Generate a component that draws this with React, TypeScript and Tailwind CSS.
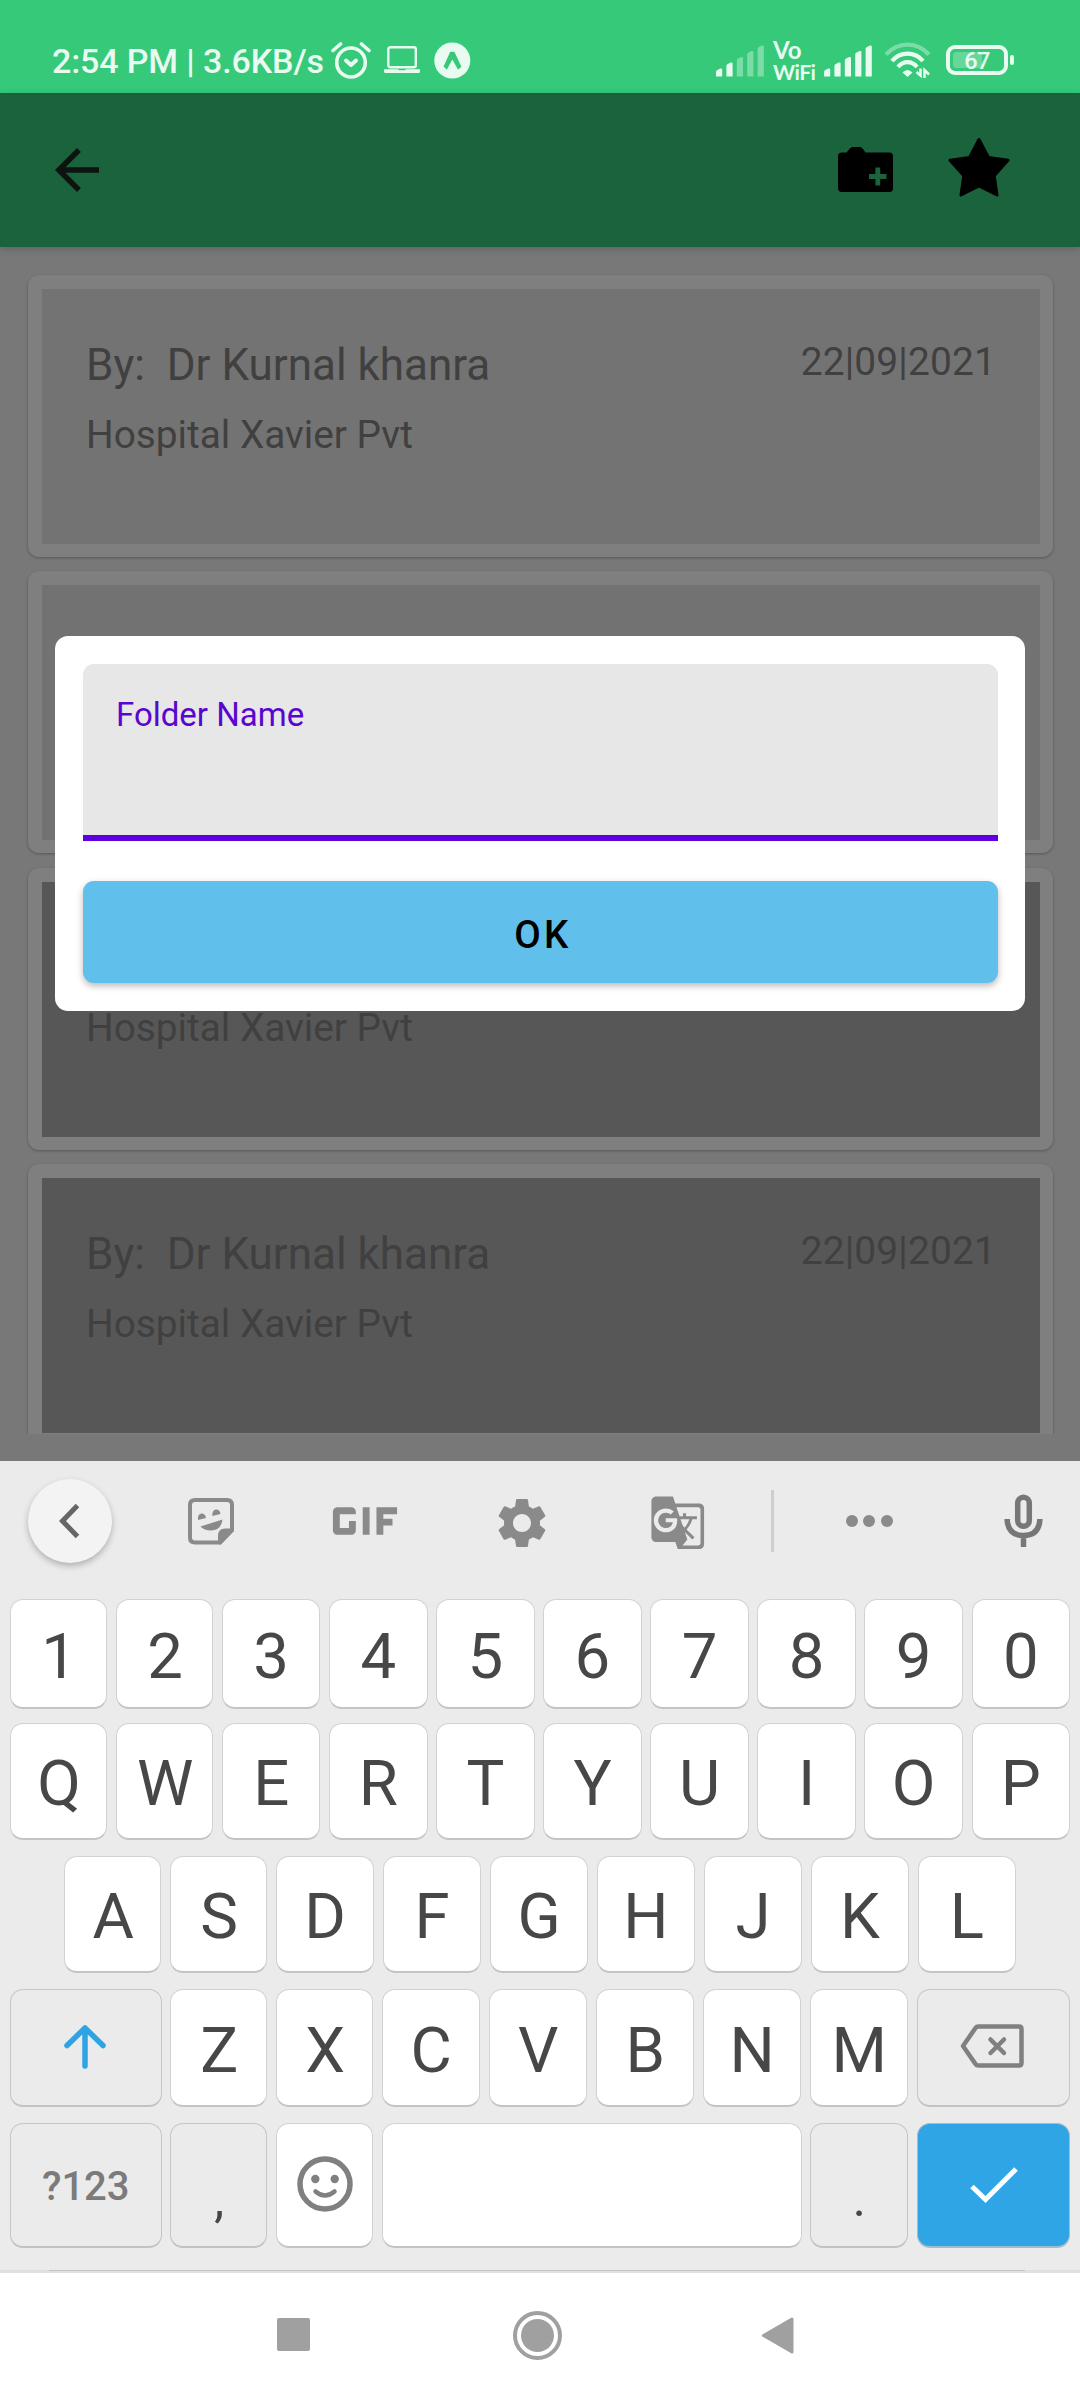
import React from "react";
import { MdArrowBack, MdGif, MdGTranslate, MdSettings } from "react-icons/md";

const LIGHT = "#e9fbf1";

function AlarmIcon() {
  return (
    <svg width="40" height="38" viewBox="0 0 40 38" fill="none" stroke={LIGHT} strokeLinecap="round" strokeLinejoin="round">
      <ellipse cx="20" cy="21.5" rx="14.3" ry="14.5" strokeWidth="3.6" />
      <path d="M2 9.5 9.5 3M38 9.5 30.500 3" strokeWidth="3.6" />
      <path d="M15 19.500l5 4.500 5-4.500" strokeWidth="4" />
    </svg>
  );
}

function LaptopIcon() {
  return (
    <svg width="36" height="28" viewBox="0 0 36 28" fill="none" stroke={LIGHT}>
      <rect x="4.300" y="1.300" width="27.500" height="20" rx="2" strokeWidth="2.400" />
      <path d="M0 23.300h14l1 1h6l1-1h14v2.200q0 1.500-1.500 1.500h-33q-1.500 0-1.500-1.500z" fill={LIGHT} stroke="none" />
    </svg>
  );
}

function ExpoIcon() {
  return (
    <svg width="37" height="37" viewBox="0 0 37 37">
      <circle cx="18.300" cy="18.500" r="18" fill={LIGHT} />
      <path
        d="M16.200 9.800h4.200l7 15-2.700 2.400q-.6.300-1-.3L18.300 17.500 13.200 26.900q-.5.700-1.100.2L9.600 24.600z"
        fill="#35c979"
      />
    </svg>
  );
}

function SignalIcon({ strength }: { strength: number }) {
  const heights = [8, 14, 19.500, 25.500, 31];
  return (
    <svg width="48" height="32" viewBox="0 0 48 32">
      {heights.map((h, i) => {
        const x = i * 10.400;
        const top = 31.500 - h;
        return (
          <path
            key={h}
            d={`M${x} ${top + 3.500}q0-1 1-1.700l3.300-1.700q1.900-.5 1.900 1V31q0 .6-.6.600h-5q-.6 0-.6-.6z`}
            fill={LIGHT}
            opacity={i < strength ? 1 : 0.4}
          />
        );
      })}
    </svg>
  );
}

function WifiIcon() {
  return (
    <svg width="48" height="37" viewBox="0 0 48 37" fill="none" stroke={LIGHT} strokeWidth="4.200">
      <path d="M2 13.500Q11 3.600 23.500 3.600T45 13.500" opacity=".4" />
      <path d="M8 20Q14 12.600 23.500 12.600T39 20" />
      <path d="M14 26Q18 21.200 23.500 21.200T33 26" />
      <path d="M18.500 31.500q5-5 10 0L23.500 36z" fill={LIGHT} stroke="none" />
      <path d="M32.500 31 36.500 34.500V27.500M40.500 37V29l4.500 4.500" strokeWidth="2.500" />
    </svg>
  );
}

function StatusBar() {
  return (
    <header className="flex h-[93px] items-start bg-[#35c979] pt-[41px] text-[#e9fbf1]">
      <div className="ml-[52px] w-[277px] text-[34px] leading-[40px] font-medium tracking-[-0.12px] whitespace-nowrap">
        2:54 PM | 3.6KB/s
      </div>
      <div className="ml-[2px] flex items-center">
        <AlarmIcon />
        <span className="ml-[13px]"><LaptopIcon /></span>
        <span className="ml-[14px]"><ExpoIcon /></span>
      </div>
      <div className="ml-auto flex items-start">
        <span className="mt-[4px]"><SignalIcon strength={2} /></span>
        <div className="ml-[9px] flex w-[42px] flex-col whitespace-nowrap font-['Lato'] font-bold">
          <span className="text-[24px] leading-[18px]">Vo</span>
          <span className="mt-[4px] text-[21px] leading-[18px] tracking-[-0.5px]">WiFi</span>
        </div>
        <span className="mt-[4px] ml-[9px]"><SignalIcon strength={5} /></span>
        <span className="ml-[12px]"><WifiIcon /></span>
        <div className="mt-[4px] mr-[66px] ml-[14px] flex items-center">
          <div className="relative flex h-[30px] w-[62px] items-center justify-center rounded-[9px] border-4 border-[#e9fbf1]">
            <div className="absolute top-[3px] left-[3px] h-[16px] w-[29px] rounded-[3px] bg-white/25" />
            <span className="relative pt-px text-[23.5px] leading-[24px] font-medium tracking-[-0.5px]">67</span>
          </div>
          <div className="ml-[2px] h-[10px] w-[4px] rounded-[2px] bg-[#e9fbf1]" />
        </div>
      </div>
    </header>
  );
}

function AppBar() {
  return (
    <div className="flex h-[154px] items-center bg-[#1b633c] shadow-[0_2px_7px_rgba(0,0,0,0.18)]">
      <MdArrowBack size={66} color="#0d130f" className="ml-[44px]" />
      <svg className="ml-auto" width="56" height="46" viewBox="0 0 56 46">
        <path
          d="M4 5.500H8.500L11.500 2Q13 0 15 0H21.500Q23.500 0 25 2L27.500 5.500H51.500Q55 5.500 55 9V41Q55 45 51.500 45H4Q0 45 0 41V9Q0 5.500 4 5.500Z"
          fill="#000"
        />
        <path d="M39.800 20.500V38.500M31 29.500H48.500" stroke="#1b633c" strokeWidth="4.800" />
      </svg>
      <svg className="mr-[70px] mb-[6px] ml-[54px]" width="62" height="60" viewBox="0 0 62 60">
        <path
          d="M31 2.500 40.500 20.500 60 23.200 46.200 38.700 49 58 31 49 13 58 15.800 38.700 2 23.200 21.500 20.500Z"
          fill="#000"
          stroke="#000"
          strokeWidth="3"
          strokeLinejoin="round"
        />
      </svg>
    </div>
  );
}

function RecordCard({ tone, gap, hideTop }: { tone: string; gap: string; hideTop?: boolean }) {
  return (
    <article
      className={`${gap} h-[282px] shrink-0 rounded-[11px] bg-[#7f7f7f] pt-[14px] pr-[13px] pb-[13px] pl-[14px] shadow-[0_1px_3px_rgba(0,0,0,0.28)]`}
    >
      <div className={`${tone} h-full pt-[50px] pr-[44px] pl-[44px] text-[#404040]`}>
        <div className="flex h-[53px] items-start justify-between">
          {!hideTop && (
            <>
              <h2 className="text-[44px] leading-[52px] whitespace-pre">By:  Dr Kurnal khanra</h2>
              <time className="text-[38.900px] leading-[46px] tracking-[0.15px]">22|09|2021</time>
            </>
          )}
        </div>
        <p className="mt-[20px] text-[38.800px] leading-[46px]">Hospital Xavier Pvt</p>
      </div>
    </article>
  );
}

function FolderDialog() {
  return (
    <section className="absolute top-[636px] left-[55px] flex h-[375px] w-[970px] flex-col rounded-[13px] bg-white px-[28px] pt-[28px]">
      <div className="h-[177px] w-[915px] rounded-t-[11px] border-b-[6px] border-[#5f00e3] bg-[#e7e7e7] pt-[31px] pl-[33px] text-[33px] leading-[40px] text-[#5a06d0]">
        Folder Name
      </div>
      <button className="mt-[40px] flex h-[102px] w-[915px] items-center justify-center rounded-[11px] bg-[#60c0eb] pt-[5px] pl-[5px] text-[38.5px] leading-[46px] font-medium tracking-[3.4px] text-black shadow-[0_3px_7px_rgba(0,0,0,0.28)]">
        OK
      </button>
    </section>
  );
}

function StickerIcon() {
  return (
    <svg width="46" height="47" viewBox="0 0 46 47">
      <path d="M7 2H39Q44 2 44 7V32L32 44.500H7Q2 44.500 2 39.500V7Q2 2 7 2Z" fill="none" stroke="#8a8a8a" strokeWidth="4" />
      <path d="M30 46V38Q30 30.500 37 30.500H46V33L33 46.500Z" fill="#8a8a8a" />
      <path d="M12.500 28.500 34.500 21.500Q33 32.500 23 32.500 16 32.500 12.500 28.500Z" fill="#8a8a8a" />
      <path d="M10 22Q9.500 16 13.500 15.500 17.500 15.500 18 20ZM24.300 18Q24 12 28 11.500 32 11.500 32.500 16Z" fill="#8a8a8a" />
    </svg>
  );
}

function MicIcon() {
  return (
    <svg width="40" height="54" viewBox="0 0 40 54" fill="none" stroke="#777" strokeWidth="5.500">
      <rect x="13.700" y="3.200" width="11.600" height="29" rx="5.800" />
      <path d="M3.200 25V26.500Q4.500 41.500 19.500 41.500T35.800 26.500V25M19.500 41V53" />
    </svg>
  );
}

function Toolbar() {
  return (
    <div className="flex h-[138px] items-center pb-[18px] text-[#8a8a8a]">
      <div className="ml-[28px] flex size-[84px] items-center justify-center rounded-full bg-[#f3f3f3] shadow-[0_3px_6px_rgba(0,0,0,0.25)]">
        <svg width="24" height="36" viewBox="0 0 24 36" fill="none" stroke="#666" strokeWidth="5">
          <path d="M19.500 2.500 4.500 18 19.500 33.500" />
        </svg>
      </div>
      <span className="ml-[76px]"><StickerIcon /></span>
      <MdGif size={110} className="ml-[76px] mb-px" />
      <MdSettings size={60} className="mt-[3px] ml-[72px]" />
      <MdGTranslate size={57.500} className="mt-[3px] ml-[97px]" />
      <div className="ml-[64px] h-[62px] w-[3px] bg-[#cecece]" />
      <div className="ml-[72px] flex gap-[5.500px]">
        <i className="size-[12px] rounded-full bg-[#8a8a8a]" />
        <i className="size-[12px] rounded-full bg-[#8a8a8a]" />
        <i className="size-[12px] rounded-full bg-[#8a8a8a]" />
      </div>
      <span className="mr-[36px] ml-auto"><MicIcon /></span>
    </div>
  );
}

const keyBase = "flex items-center justify-center rounded-[13px] border border-b-2 ";
const lightKey = keyBase + "border-[#d2d2d2] border-b-[#c4c4c4] bg-white";
const grayKey = keyBase + "border-[#c6c6c6] border-b-[#c2c2c2] bg-[#ebebeb]";

function Letters({ keys }: { keys: string }) {
  return (
    <>
      {keys.split("").map((k, i) => (
        <div key={k} className={`${lightKey} pt-[6px] ${i < 2 ? "w-[97.400px] shrink-0 pl-px" : "min-w-0 flex-1"}`}>
          {k}
        </div>
      ))}
    </>
  );
}

function Keyboard() {
  return (
    <div className="relative flex h-[812px] flex-col border-b-[3px] border-[#e0e0e0] bg-[#ebebeb]">
      <Toolbar />
      <div className="flex flex-col px-[10px] text-[63.500px] leading-none text-[#474747]">
        <div className="flex h-[110px] gap-[8.600px]">
          <Letters keys="1234567890" />
        </div>
        <div className="mt-[14px] flex h-[117px] gap-[8.600px]">
          <Letters keys="QWERTYUIOP" />
        </div>
        <div className="mt-[16px] flex h-[117px] gap-[8.600px] px-[54px]">
          <Letters keys="ASDFGHJKL" />
        </div>
        <div className="mt-[16px] flex h-[118px] gap-[8.600px]">
          <div className={`${grayKey} w-[151.500px] pr-px pb-[2px]`}>
            <svg width="42" height="44" viewBox="0 0 42 44" fill="none" stroke="#30a4e3" strokeWidth="5.500" strokeLinecap="round" strokeLinejoin="round">
              <path d="M3 20.500 21 3 39 20.500M21 3V41" />
            </svg>
          </div>
          <Letters keys="ZXCVBNM" />
          <div className={`${grayKey} w-[153px] pr-[2px] pb-[4px]`}>
            <svg width="64" height="44" viewBox="0 0 64 44" fill="none" stroke="#808080" strokeLinecap="round" strokeLinejoin="round">
              <path d="M18.500 2.500H59Q61.500 2.500 61.500 5V39Q61.500 41.500 59 41.500H18.500Q16.500 41.500 15.500 40L3 22 15.500 4Q16.500 2.500 18.500 2.500Z" strokeWidth="4.500" />
              <path d="M30.500 15.500 44 29M44 15.500 30.500 29" strokeWidth="4.500" />
            </svg>
          </div>
        </div>
        <div className="mt-[16px] flex h-[125px] gap-[8.600px]">
          <div className={`${grayKey} w-[151.500px] pt-[3px] text-[40px] font-medium text-[#7b7b7b]`}>?123</div>
          <div className={`${grayKey} w-[97.400px] pt-[28px] pl-px text-[50px]`}>,</div>
          <div className={`${lightKey} w-[97.400px] pb-[2px]`}>
            <svg width="56" height="56" viewBox="0 0 56 56" fill="none" stroke="#808080" strokeLinecap="round">
              <circle cx="28" cy="28" r="25" strokeWidth="5.500" />
              <path d="M18.500 35.500Q28 43.500 37.500 35.500" strokeWidth="4.500" />
              <circle cx="18.300" cy="23" r="4.200" fill="#808080" stroke="none" />
              <circle cx="37.700" cy="23" r="4.200" fill="#808080" stroke="none" />
            </svg>
          </div>
          <div className={`${lightKey} flex-1`} />
          <div className={`${grayKey} w-[98.200px] pt-[28px] text-[50px]`}>.</div>
          <div className="flex w-[153px] items-center justify-center rounded-[13px] border border-b-2 border-[#a3bccb] bg-[#30a5e6]">
            <svg width="48" height="38" viewBox="0 0 48 38" fill="none" stroke="#fff" strokeWidth="5">
              <path d="M2 20.500 15.500 33.500 46 3" />
            </svg>
          </div>
        </div>
      </div>
      <div className="mt-auto ml-[49px] h-px w-[976px] translate-y-px bg-[#c4c4c4]" />
    </div>
  );
}

function NavBar() {
  return (
    <nav className="flex flex-1 items-start bg-white">
      <div className="mt-[45px] ml-[276.500px] size-[33px] rounded-[2px] bg-[#a0a0a0]" />
      <div className="mt-[38px] ml-[203.500px] flex size-[49px] items-center justify-center rounded-full border-4 border-[#a0a0a0]">
        <div className="size-[33px] rounded-full bg-[#a0a0a0]" />
      </div>
      <svg className="mt-[43px] ml-[199px]" width="33" height="39" viewBox="0 0 33 39">
        <path d="M31 3V36L2.500 19.500Z" fill="#a0a0a0" stroke="#a0a0a0" strokeWidth="3" strokeLinejoin="round" />
      </svg>
    </nav>
  );
}

export default function App() {
  return (
    <div className="relative flex h-[2400px] w-[1080px] flex-col overflow-hidden bg-[#787878] font-['Roboto',sans-serif]">
      <StatusBar />
      <AppBar />
      <main className="mb-[27px] flex h-[1187px] flex-col overflow-hidden pr-[27px] pl-[28px]">
        <RecordCard tone="bg-[#737373]" gap="mt-[28px]" />
        <RecordCard tone="bg-[#727272]" gap="mt-[14px]" />
        <RecordCard tone="bg-[#575757]" gap="mt-[15px]" hideTop />
        <RecordCard tone="bg-[#575757]" gap="mt-[14px]" />
      </main>
      <Keyboard />
      <NavBar />
      <FolderDialog />
    </div>
  );
}
